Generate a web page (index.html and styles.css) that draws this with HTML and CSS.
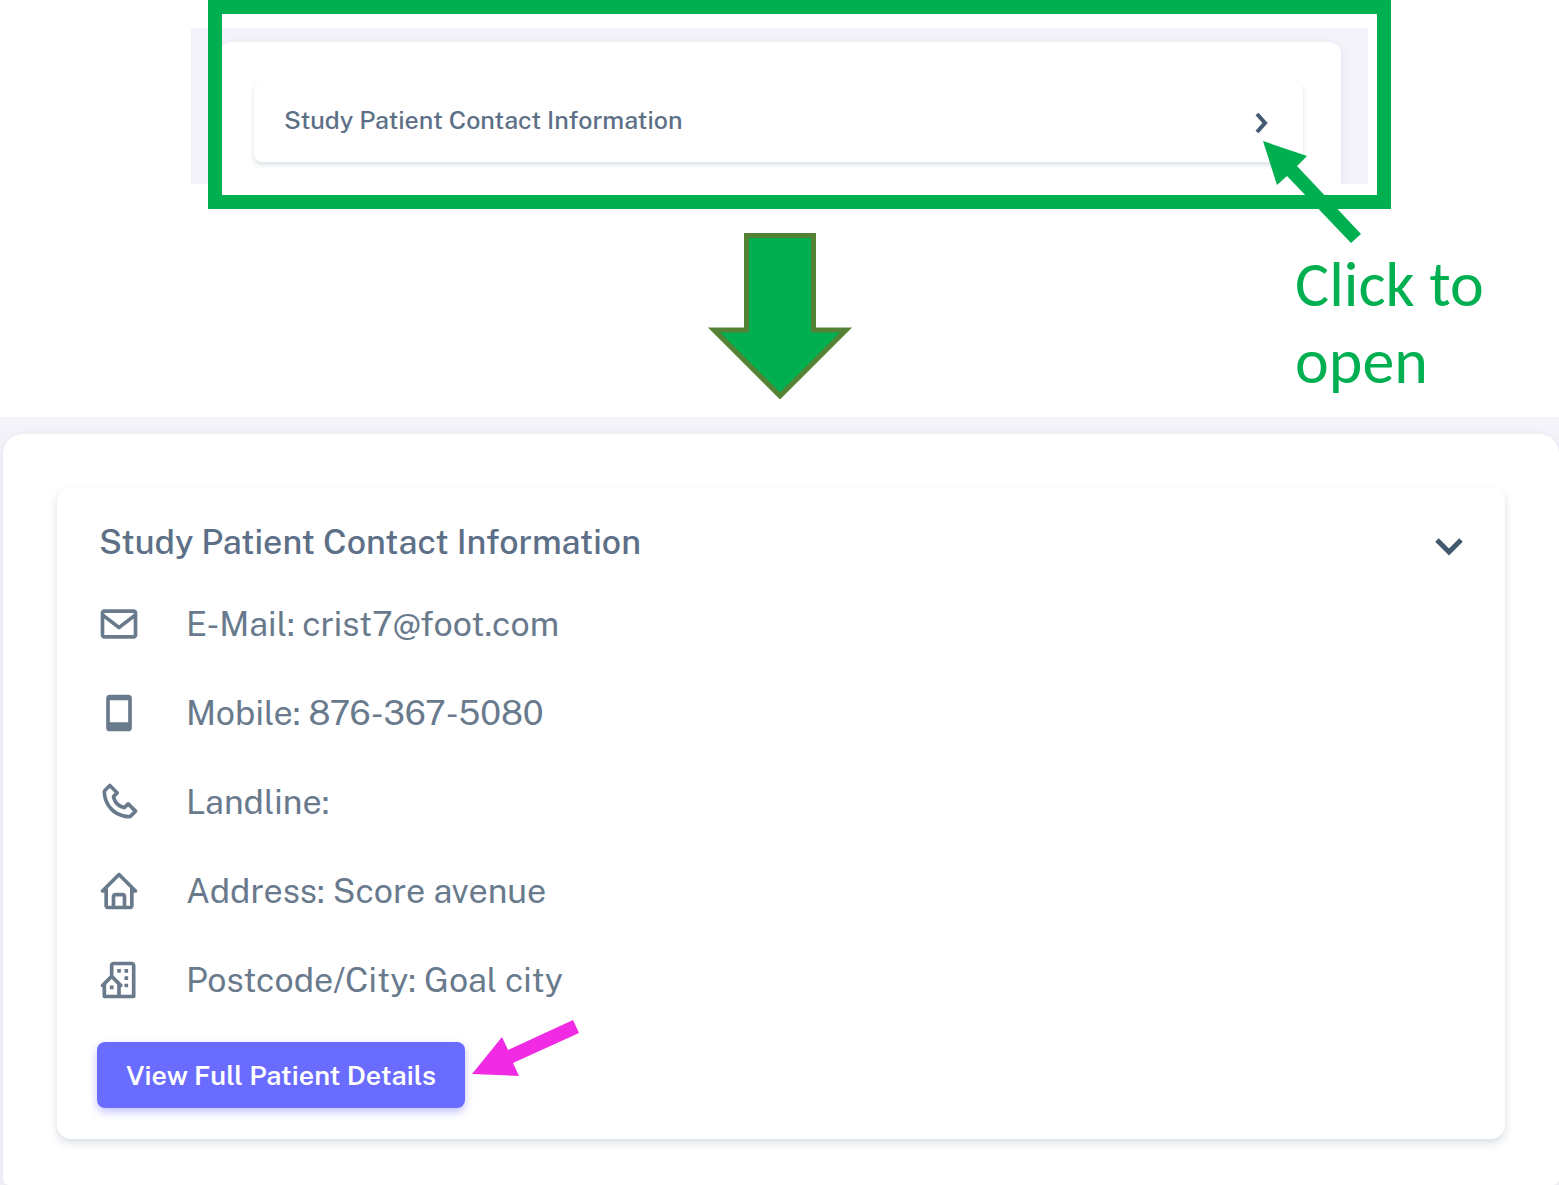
FILE: index.html
```html
<!DOCTYPE html>
<html lang="en">
<head>
<meta charset="utf-8">
<title>Study Patient Contact Information</title>
<link rel="stylesheet" href="styles.css">
</head>
<body>
<main class="guide">
  <section class="step">
    <div class="closed-view">
      <div class="sheet sheet-small">
        <div class="panel panel-small">
          <button class="panel-toggle toggle-small" type="button" aria-expanded="false">
            <span>Study Patient Contact Information</span>
            <svg class="chevron-small" viewBox="0 0 14 22" aria-hidden="true"><path d="M2 2l8 9-8 9"/></svg>
          </button>
        </div>
      </div>
      <div class="highlight"></div>
      <svg class="pointer-open" viewBox="0 0 100 104" aria-hidden="true"><path d="M0 0L44 15 34 25 98 93 88 102 24 35 14 44z"/></svg>
    </div>
    <div class="transition">
      <svg class="down-arrow" viewBox="0 0 146 168" aria-hidden="true"><path d="M39.500 2.500H106.500V97H139L73 163 7 97H39.500z"/></svg>
      <p class="hint">Click to open</p>
    </div>
  </section>

  <section class="open-view">
    <div class="sheet sheet-large">
      <div class="panel panel-large">
        <button class="panel-toggle toggle-large" type="button" aria-expanded="true" aria-controls="contact">
          <span>Study Patient Contact Information</span>
          <svg class="chevron-large" viewBox="0 0 30 20" aria-hidden="true"><path d="M3 3l12 12L27 3"/></svg>
        </button>
        <ul class="contact-list" id="contact">
          <li class="contact-row">
            <svg class="icon" viewBox="0 0 24 24" aria-hidden="true"><path d="M20 4H4c-1.103 0-2 .897-2 2v12c0 1.103.897 2 2 2h16c1.103 0 2-.897 2-2V6c0-1.103-.897-2-2-2zm0 2v.511l-8 6.223-8-6.222V6h16zM4 18V9.044l7.386 5.745a.994.994 0 0 0 1.228 0L20 9.044 20.002 18H4z"/></svg>
            <span>E-Mail: crist7@foot.com</span>
          </li>
          <li class="contact-row">
            <svg class="icon" viewBox="0 0 24 24" aria-hidden="true"><path fill-rule="evenodd" d="M7 2h10a2 2 0 0 1 2 2v16a2 2 0 0 1-2 2H7a2 2 0 0 1-2-2V4a2 2 0 0 1 2-2zM7 5v12h10V5z"/></svg>
            <span>Mobile: 876-367-5080</span>
          </li>
          <li class="contact-row">
            <svg class="icon" viewBox="0 0 24 24" aria-hidden="true"><path d="M17.707 12.293a.999.999 0 0 0-1.414 0l-1.594 1.594c-.739-.22-2.118-.72-2.992-1.594s-1.374-2.253-1.594-2.992l1.594-1.594a.999.999 0 0 0 0-1.414l-4-4a.999.999 0 0 0-1.414 0L3.581 5.005c-.38.38-.594.902-.586 1.435.023 1.424.4 6.37 4.298 10.268s8.844 4.274 10.269 4.298h.028c.528 0 1.027-.208 1.405-.586l2.712-2.712a.999.999 0 0 0 0-1.414l-4-4.001zm-.127 6.712c-1.248-.021-5.518-.356-8.873-3.712-3.366-3.366-3.692-7.651-3.712-8.874L7 4.414 9.586 7 8.293 8.293a1 1 0 0 0-.272.912c.024.115.611 2.842 2.271 4.502s4.387 2.247 4.502 2.271a.991.991 0 0 0 .912-.271L17 14.414 19.586 17l-2.006 2.005z"/></svg>
            <span>Landline:</span>
          </li>
          <li class="contact-row">
            <svg class="icon" viewBox="0 0 24 24" aria-hidden="true"><path d="M3 13h1v7c0 1.103.897 2 2 2h12c1.103 0 2-.897 2-2v-7h1a1 1 0 0 0 .707-1.707l-9-9a.999.999 0 0 0-1.414 0l-9 9A1 1 0 0 0 3 13zm7 7v-5h4v5h-4zm2-15.586 6 6V15l.001 5H16v-5c0-1.103-.897-2-2-2h-4c-1.103 0-2 .897-2 2v5H6v-9.586l6-6z"/></svg>
            <span>Address: Score avenue</span>
          </li>
          <li class="contact-row">
            <svg class="icon" viewBox="0 0 24 24" aria-hidden="true"><path d="M19 2H9c-1.103 0-2 .897-2 2v5.586l-4.707 4.707A1 1 0 0 0 3 16v5a1 1 0 0 0 1 1h16a1 1 0 0 0 1-1V4c0-1.103-.897-2-2-2zm-8 18H5v-5.586l3-3 3 3V20zm8 0h-6v-4a.999.999 0 0 0 .707-1.707L9 9.586V4h10v16z"/><path d="M11 6h2v2h-2zM15 6h2v2h-2zM15 10h2v2h-2zM15 14h2v2h-2zM7 15h2v2H7z"/></svg>
            <span>Postcode/City: Goal city</span>
          </li>
        </ul>
        <div class="actions">
          <button class="details-button" type="button">View Full Patient Details</button>
          <svg class="pointer-details" viewBox="0 0 108 58" aria-hidden="true"><path d="M0 55L30 18 36 31 101 1 107 14 41 44 47 57z"/></svg>
        </div>
      </div>
    </div>
  </section>
</main>
</body>
</html>
```
FILE: styles.css
```css
* {
  box-sizing: border-box;
}

body {
  margin: 0;
  background: #fff;
  color: #697a8d;
  font-family: "Public Sans", Inter, sans-serif;
}

button {
  border: 0;
  font-family: inherit;
  cursor: pointer;
}

.guide {
  display: flex;
  flex-direction: column;
}

.step {
  padding-top: 28px;
}

.closed-view {
  position: relative;
  margin: 0 191px;
  padding: 14px 27px 0 29px;
  background: #f4f3f9;
}

.sheet {
  background: #fff;
  box-shadow: 0 2px 8px rgba(67, 89, 113, 0.1);
}

.sheet-small {
  padding: 40px 38px 22px 34px;
  border-radius: 12px 12px 0 0;
  clip-path: inset(-12px -12px 0 -12px);
}

.panel {
  background: #fff;
}

.panel-small {
  border-radius: 8px;
  box-shadow: 0 3px 5px rgba(67, 89, 113, 0.18);
}

.panel-toggle {
  display: flex;
  align-items: center;
  justify-content: space-between;
  width: 100%;
  background: none;
  color: #5d7087;
  font-weight: 500;
  text-align: left;
}

.toggle-small {
  height: 80px;
  padding: 0 34px 4px 30px;
  font-size: 25px;
}

.panel-toggle svg {
  fill: none;
  stroke: #435971;
}

.chevron-small {
  width: 14px;
  height: 22px;
  margin-top: 6px;
  stroke-width: 4;
}

.highlight {
  position: absolute;
  inset: -28px -23px -25px 17px;
  border: 14px solid #00b050;
}

.pointer-open {
  position: absolute;
  top: 113px;
  right: 5px;
  width: 100px;
  height: 104px;
  fill: #00b050;
}

.transition {
  display: grid;
  grid-template-columns: 1fr auto 1fr;
  align-items: start;
  padding: 49px 0 16px;
}

.down-arrow {
  grid-column: 2;
  width: 146px;
  height: 168px;
  fill: #00b050;
  stroke: #548235;
  stroke-width: 5;
}

.hint {
  justify-self: end;
  width: 200px;
  margin: 13px 64px 0 0;
  color: #00b050;
  font-family: Calibri, Carlito, Lato, sans-serif;
  font-size: 64px;
  line-height: 77px;
}

.open-view {
  padding: 17px 0 0 3px;
  background: #f4f3f9;
}

.sheet-large {
  padding: 54px 54px 46px;
  border-radius: 20px 20px 6px 6px;
}

.panel-large {
  padding: 30px 41px 31px 40px;
  border-radius: 14px;
  box-shadow: 0 4px 8px rgba(67, 89, 113, 0.2);
}

.toggle-large {
  height: 48px;
  padding: 0 0 0 2px;
  font-size: 34px;
}

.chevron-large {
  width: 30px;
  height: 20px;
  margin-top: 10px;
  stroke-width: 5;
}

.contact-list {
  margin: 13px 0 18px;
  padding: 0;
  list-style: none;
}

.contact-row {
  display: flex;
  align-items: center;
  gap: 45px;
  height: 89px;
  font-size: 34px;
}

.icon {
  width: 44px;
  height: 44px;
  fill: #697a8d;
}

.actions {
  position: relative;
  display: flex;
}

.details-button {
  height: 66px;
  padding: 0 29px;
  border-radius: 8px;
  background: #696cff;
  box-shadow: 0 4px 8px rgba(105, 108, 255, 0.4);
  color: #fff;
  font-size: 27px;
  font-weight: 600;
}

.pointer-details {
  position: absolute;
  top: -23px;
  left: 375px;
  width: 108px;
  height: 58px;
  fill: #f02be3;
}
```
